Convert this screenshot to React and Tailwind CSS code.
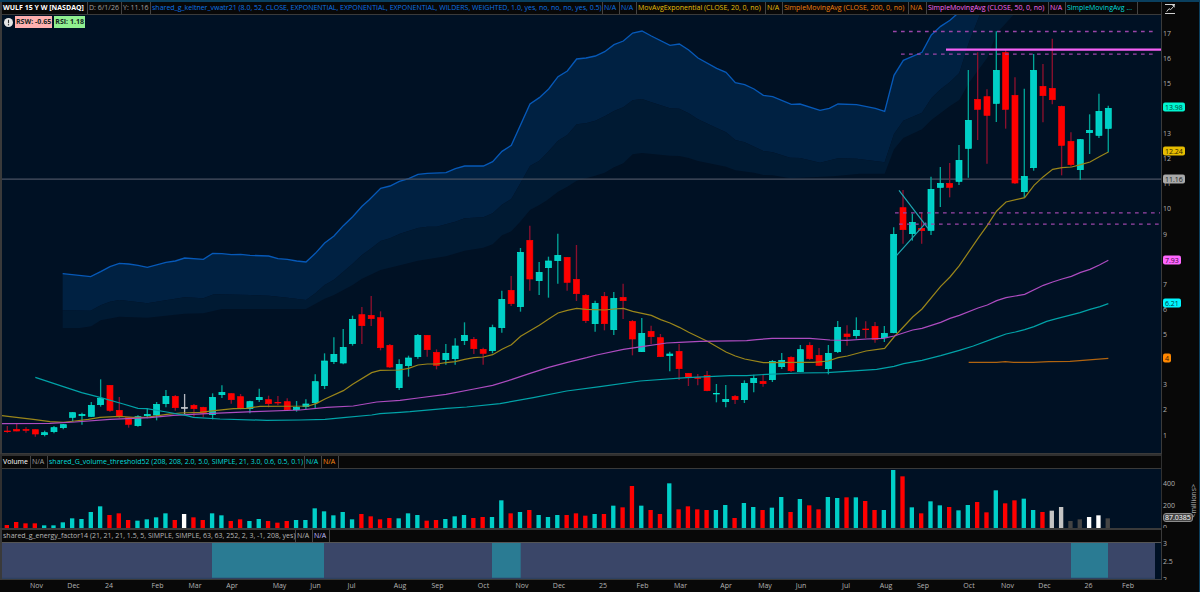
const NAVY = "#001124";

const candles = `r 1278 1292 1296 1298|r 1272 1287 1294 1294|r 1282 1287 1292 1298|r 1288 1288 1303 1310|c 1292 1297 1305 1309|c 1278 1282 1296 1300|c 1272 1273 1284 1288|c 1237 1237 1253 1264|c 1238 1242 1248 1274|c 1206 1215 1250 1250|c 1138 1194 1215 1220|r 1155 1155 1232 1235|r 1191 1230 1250 1255|r 1252 1252 1274 1283|c 1246 1249 1278 1280|c 1225 1242 1248 1255|c 1206 1212 1246 1261|c 1170 1188 1212 1222|r 1185 1188 1224 1232|w 1182 1221 1226 1243|r 1212 1215 1227 1250|r 1220 1221 1241 1252|c 1180 1191 1245 1258|c 1156 1176 1185 1194|r 1180 1180 1200 1211|r 1182 1189 1226 1228|c 1202 1204 1227 1240|c 1166 1191 1200 1206|r 1187 1198 1212 1222|r 1188 1206 1209 1216|r 1195 1204 1230 1233|c 1203 1221 1230 1235|c 1198 1211 1221 1228|c 1123 1144 1209 1224|c 1060 1082 1158 1167|c 1012 1062 1086 1092|c 987 1041 1090 1093|c 947 957 1032 1037|r 921 943 978 1032|r 888 945 957 978|r 934 952 1044 1051|r 1032 1035 1102 1104|c 1078 1092 1164 1170|c 1067 1073 1098 1130|c 1002 1005 1071 1076|r 1005 1005 1050 1070|r 1048 1056 1097 1108|c 1032 1059 1080 1094|c 1015 1037 1077 1094|c 967 1005 1023 1035|r 1011 1017 1047 1062|r 1043 1047 1061 1094|c 974 982 1053 1060|c 872 897 984 998|r 828 870 912 918|c 744 756 921 935|r 677 720 838 872|c 786 816 843 885|c 770 782 804 893|c 701 765 783 851|r 771 771 848 872|r 735 837 882 903|r 882 885 963 969|c 902 909 972 995|r 876 888 972 991|c 876 894 990 1005|r 851 891 903 957|r 960 963 1018 1066|c 954 999 1056 1056|r 977 993 1011 1032|r 1002 1012 1071 1071|c 1055 1061 1068 1114|r 1032 1053 1107 1140|r 1119 1119 1132 1158|r 1122 1132 1136 1156|r 1113 1125 1173 1174|c 1152 1179 1183 1207|c 1155 1197 1206 1222|r 1185 1188 1200 1212|c 1141 1149 1200 1209|c 1124 1134 1149 1177|r 1122 1143 1152 1160|c 1080 1083 1140 1146|c 1059 1080 1101 1107|r 1069 1071 1113 1116|c 1035 1048 1116 1116|r 1027 1035 1077 1079|r 1044 1065 1097 1098|c 1035 1059 1107 1123|c 963 981 1056 1059|r 976 1001 1011 1037|c 952 990 1008 1016|r 964 986 990 1014|r 966 978 1019 1028|c 978 999 1014 1026|c 682 702 999 1000|r 570 622 690 731|c 641 666 702 722|r 638 684 693 731|c 530 567 692 705|c 501 549 563 621|r 489 549 563 592|c 435 480 545 555|c 210 360 446 533|r 157 297 329 420|r 268 289 347 491|c 94 210 311 366|r 147 157 329 386|r 232 285 550 552|c 266 528 576 592|c 162 210 504 512|r 192 258 288 367|r 116 264 300 313|r 317 318 437 526|r 397 423 495 500|c 417 418 510 540|c 343 390 399 462|c 281 333 407 414|c 317 324 386 457`
  .split("|")
  .map((row) => {
    const [kind, ...v] = row.split(" ");
    return [kind, ...v.map(Number)];
  });

const volumes =
  "r225 r216 r220 r220 c226 c226 c217 c205 c207 c186 c169 r195 r190 r210 c212 c208 c202 c190 r210 w192 r202 r210 c190 c196 r213 r208 c213 c207 r213 r218 r213 c210 c210 c175 c184 c196 c186 c208 r192 r199 r208 r204 c205 c190 c195 r212 r210 c207 c199 c195 r204 r201 c201 c151 r190 c186 r180 c195 c201 c195 r195 r190 r197 c192 r192 c167 r172 r108 c167 r180 r192 c100 r178 r169 r178 r180 c180 c165 r204 c159 c171 r180 c173 c141 r186 c147 r166 r178 c141 c144 r142 c142 r153 r180 c180 c60 r79 c172 r190 c154 c166 r171 c181 c165 r156 r187 c121 r160 r151 c146 c180 r186 g182 g171 d213 d208 w201 w196 d205"
    .split(" ")
    .map((s) => [s[0], Number(s.slice(1))]);

const upper =
  "188,821 272,830 302,815 330,800 358,790 386,792 414,796 442,802 498,787 526,783 554,774 610,778 638,760 666,761 694,764 722,763 750,766 806,768 834,776 862,778 890,783 918,786 946,760 974,729 1002,708 1030,677 1058,650 1086,619 1107,600 1142,565 1170,558 1198,544 1226,536 1254,523 1282,520 1338,518 1366,506 1394,498 1450,498 1478,485 1506,454 1534,436 1590,312 1618,293 1646,267 1674,230 1702,213 1730,177 1758,174 1786,168 1814,155 1842,134 1870,123 1898,99 1926,93 1954,108 2010,136 2038,132 2066,150 2094,174 2150,205 2178,217 2206,248 2234,254 2262,267 2290,286 2318,290 2374,313 2400,312 2460,331 2488,325 2514,312 2570,314 2626,325 2654,334 2682,226 2710,181 2766,157 2794,105 2822,79 2850,61 2870,43";
const middle =
  "188,931 272,932 302,916 330,905 358,900 386,903 442,910 498,901 554,892 610,895 642,883 750,885 806,887 862,893 918,900 946,880 974,855 1002,839 1058,791 1086,765 1114,745 1142,723 1170,715 1200,701 1254,684 1282,680 1310,680 1366,665 1394,655 1450,652 1478,640 1506,614 1534,597 1562,548 1590,498 1618,482 1646,454 1674,422 1702,405 1730,373 1758,370 1786,362 1814,349 1842,333 1870,322 1898,301 1926,297 1954,307 2010,325 2038,326 2066,340 2094,358 2150,384 2178,397 2206,420 2234,427 2290,453 2318,457 2370,473 2400,474 2460,488 2514,475 2570,476 2654,487 2682,402 2710,362 2766,338 2794,295 2822,268 2850,246 2878,219 2906,130 2940,43";
const lower =
  "188,984 240,984 274,979 302,961 358,950 442,953 554,941 610,940 666,927 918,927 974,896 1002,885 1058,855 1086,836 1142,810 1200,796 1254,782 1338,769 1394,752 1450,743 1478,733 1506,706 1534,694 1562,664 1590,630 1618,615 1642,600 1674,575 1702,560 1730,542 1786,527 1814,518 1842,502 1870,490 1898,463 1926,459 2010,467 2038,468 2066,474 2094,483 2178,500 2206,511 2262,518 2290,525 2318,526 2370,535 2500,529 2540,525 2580,521 2654,521 2682,448 2710,414 2766,388 2794,360 2850,318 2878,300 2906,250 2962,173 2990,100 3042,43";

const reversed = (pts) => pts.split(" ").reverse().join(" ");

const averages = [
  ["#9a861a", "0,1246 30,1250 100,1258 150,1265 190,1267 225,1263 265,1258 300,1252 358,1249 400,1252 440,1252 500,1243 540,1239 600,1237 650,1231 700,1226 740,1225 780,1219 925,1218 950,1210 975,1197 1030,1172 1058,1153 1115,1118 1140,1111 1198,1110 1226,1105 1254,1095 1282,1092 1310,1092 1338,1088 1366,1085 1394,1078 1422,1073 1450,1071 1478,1064 1506,1048 1534,1034 1562,1009 1590,992 1618,976 1646,957 1674,939 1702,931 1730,925 1758,928 1814,930 1842,927 1870,925 1898,934 1954,946 1982,959 2010,969 2038,982 2066,997 2094,1010 2122,1024 2178,1056 2206,1068 2234,1077 2290,1088 2400,1087 2440,1087 2485,1083 2514,1073 2542,1068 2598,1053 2654,1045 2682,1011 2738,951 2766,927 2822,859 2850,831 2878,797 2934,715 2962,676 2990,633 3018,606 3074,593 3102,556 3130,530 3158,508 3186,503 3215,501 3242,494 3270,486 3298,470 3325,456"],
  ["#ad4cc0", "0,1271 150,1270 225,1266 330,1258 450,1253 520,1246 620,1241 760,1235 900,1230 980,1222 1060,1218 1130,1206 1200,1201 1254,1194 1338,1183 1422,1167 1478,1156 1534,1139 1590,1120 1646,1102 1702,1087 1760,1073 1790,1065 1870,1048 1926,1040 2000,1029 2038,1027 2100,1024 2240,1022 2270,1019 2316,1015 2430,1015 2490,1020 2540,1021 2600,1017 2650,1015 2682,1008 2738,990 2766,985 2822,967 2850,955 2878,946 2934,924 2962,915 2990,902 3018,893 3046,888 3074,883 3130,856 3158,846 3186,837 3214,829 3242,817 3270,808 3298,795 3325,781"],
  ["#00a3a8", "106,1132 190,1160 245,1178 300,1192 370,1212 414,1225 440,1226 500,1236 560,1247 580,1252 660,1257 800,1261 900,1260 975,1258 1030,1253 1115,1245 1140,1241 1200,1237 1230,1235 1340,1225 1400,1221 1500,1211 1600,1193 1700,1173 1800,1160 1920,1143 2060,1133 2190,1127 2240,1127 2300,1123 2400,1119 2480,1118 2540,1114 2630,1108 2682,1099 2711,1091 2766,1081 2822,1067 2878,1051 2920,1038 2990,1012 3018,1002 3046,996 3074,989 3102,980 3140,964 3170,956 3240,938 3270,928 3300,920 3325,911"],
  ["#b06410", "2906,1087 2990,1087 3016,1085 3040,1087 3100,1087 3146,1085 3210,1084 3325,1075"],
];

const bodyColor = { r: "#ff0000", c: "#00cfc8", w: "#c8ccd2" };
const edgeColor = { r: "#ff0000", c: "#00ecd2", w: "#c8ccd2" };
const wickColor = { r: "#8c102e", c: "#00a598", w: "#b4b8c0" };
const volColor = { r: "#ff0000", c: "#00cfc8", w: "#ffffff", g: "#c4c4c4", d: "#444444" };

const xAt = (i) => 22 + i * 27.99;

const mainCells = [
  ["w-[86px] font-bold text-white", "WULF 15 Y W [NASDAQ]"],
  ["w-[34px] text-[#a0a0a0]", "D: 6/1/26"],
  ["w-[29px] text-[#a0a0a0]", "Y: 11.16"],
  ["w-[452px] text-[#0c74e6]", "shared_g_keltner_vwatr21 (8.0, 52, CLOSE, EXPONENTIAL, EXPONENTIAL, EXPONENTIAL, WILDERS, WEIGHTED, 1.0, yes, no, no, no, yes, 0.5)"],
  ["w-[17px] text-[#0c74e6]", "N/A"],
  ["w-[17px] text-[#0c74e6]", "N/A"],
  ["w-[129px] text-[#e4bf0a]", "MovAvgExponential (CLOSE, 20, 0, no)"],
  ["w-[17px] text-[#e4bf0a]", "N/A"],
  ["w-[126px] text-[#f08010]", "SimpleMovingAvg (CLOSE, 200, 0, no)"],
  ["w-[18px] text-[#f08010]", "N/A"],
  ["w-[122px] text-[#f56af5]", "SimpleMovingAvg (CLOSE, 50, 0, no)"],
  ["w-[17px] text-[#f56af5]", "N/A"],
  ["w-[72px] text-[#00dcdc]", "SimpleMovingAvg ..."],
];
const volumeCells = [
  ["w-[29px] text-white", "Volume"],
  ["w-[17px] text-[#a0a0a0]", "N/A"],
  ["w-[257px] text-[#00dcdc]", "shared_G_volume_threshold52 (208, 208, 2.0, 5.0, SIMPLE, 21, 3.0, 0.6, 0.5, 0.1)"],
  ["w-[17px] text-[#00dcdc]", "N/A"],
  ["w-[17px] text-[#ff8810]", "N/A"],
];
const energyCells = [
  ["w-[294px] text-[#b8b8b8]", "shared_g_energy_factor14 (21, 21, 21, 1.5, 5, SIMPLE, SIMPLE, 63, 63, 252, 2, 3, -1, 208, yes)"],
  ["w-[17px] text-[#b8b8b8]", "N/A"],
  ["w-[17px] text-[#c0beff]", "N/A"],
];

const badges = [
  [107, "13.98", "bg-[#00f5d0] text-[#003c34]"],
  [151, "12.24", "bg-[#e6bc00] text-[#2e2500]"],
  [179, "11.16", "bg-[#a8a8a8] text-[#202020]"],
  [259, "7.93", "bg-[#ff66ff] text-[#3c0c3c]"],
  [302, "6.21", "bg-[#00f5ff] text-[#00383c]"],
  [357, "4", "bg-[#ff8800] text-[#301600]"],
];

// Levels fully covered by a badge carry no tick label.
const coveredLevels = [14, 8, 4];

const months = [
  [36.5, "Nov"], [73.5, "Dec"], [109, "24"], [157.5, "Feb"], [195, "Mar"], [232, "Apr"], [279.5, "May"], [315.5, "Jun"], [351.5, "Jul"], [400, "Aug"], [437.5, "Sep"], [483.5, "Oct"], [522, "Nov"], [559, "Dec"], [603, "25"], [642.5, "Feb"], [680.5, "Mar"], [726, "Apr"], [765, "May"], [801, "Jun"], [846, "Jul"], [886, "Aug"], [923, "Sep"], [969, "Oct"], [1007.5, "Nov"], [1044.5, "Dec"], [1088.5, "26"], [1128, "Feb"],
];

function CellRow({ cells }) {
  return (
    <header className="flex h-[12px] shrink-0 overflow-hidden whitespace-nowrap bg-[#080808] leading-[11px]">
      {cells.map(([cls, text], i) => (
        <span key={i} className={`shrink-0 border-r border-[#444444] pl-px ${cls}`}>
          {text}
        </span>
      ))}
    </header>
  );
}

function PriceChart() {
  return (
    <svg className="block h-full w-full" viewBox="6 45 3477 1314" preserveAspectRatio="none" role="img" aria-label="WULF weekly price">
      <rect x="0" y="0" width="3490" height="1400" fill={NAVY} />
      <polygon points={`${upper} ${reversed(middle)}`} fill="#002142" />
      <polygon points={`${middle} ${reversed(lower)}`} fill="#001a33" />
      <polyline points={upper} fill="none" stroke="#0659b8" strokeWidth="4" />
      <path d="M0 537.5H3483" stroke="#4a5262" strokeWidth="4" />
      {candles.map(([k, h, t, b, l], i) => (
        <g key={i}>
          <path d={`M${xAt(i)} ${h}V${l}`} stroke={wickColor[k]} strokeWidth="4" />
          <rect x={xAt(i) - 9} y={t + 1} width="18" height={Math.max(2, b - t - 2)} fill={bodyColor[k]} stroke={edgeColor[k]} strokeWidth="2" />
        </g>
      ))}
      <g fill="none" strokeWidth="3.6">
        {averages.map(([color, pts]) => (
          <polyline key={color} points={pts} stroke={color} />
        ))}
        <path d="M2697 571L2784 685M2690 766L2778 668" stroke="#1fa5b0" />
      </g>
      <g stroke="#9a45a8" strokeWidth="4" strokeDasharray="11 13">
        <path d="M2679 94.500H3471M2703 162.500H3471M2685 638.500H3480M2697 672.500H3483" />
      </g>
      <path d="M2838 149H3483" stroke="#f560f5" strokeWidth="7" />
    </svg>
  );
}

function VolumeChart() {
  return (
    <svg className="block h-full w-full" viewBox="6 57 3477 177" preserveAspectRatio="none" role="img" aria-label="Volume">
      <rect x="0" y="50" width="3490" height="190" fill={NAVY} />
      {volumes.map(([k, y], i) => (
        <rect key={i} x={xAt(i) - 8} y={y} width="13" height={234 - y} fill={volColor[k]} />
      ))}
    </svg>
  );
}

function EnergyChart() {
  return (
    <svg className="block h-full w-full" viewBox="6 0 3477 108" preserveAspectRatio="none" role="img" aria-label="Energy factor">
      <rect x="0" y="0" width="3490" height="108" fill={NAVY} />
      <rect x="0" y="0" width="3465" height="108" fill="#3a4668" />
      <path d="M636 0h336v108H636zM1476 0h86v108h-86zM3213 0h111v108h-111z" fill="#2a7b93" />
      <path d="M0 106H3465" stroke="#2e4160" strokeWidth="4" />
    </svg>
  );
}

function Alert() {
  return (
    <svg className="size-[9px]" viewBox="0 0 18 18" aria-label="Alert">
      <circle cx="9" cy="9" r="9" fill="#e6e6e6" />
      <path d="M9 3.500V10.500" stroke="#333" strokeWidth="2.200" />
      <circle cx="9" cy="13.500" r="1.400" fill="#333" />
    </svg>
  );
}

export default function App() {
  return (
    <main className="flex h-screen min-h-[400px] flex-col overflow-hidden border-t-2 border-r border-[#0a3f5e] bg-[#080808] font-['Open_Sans','Noto_Sans',sans-serif] text-[7px] text-[#b0b0b0]">
      <section className="flex min-h-0 flex-1">
        <div className="flex min-w-0 flex-1 flex-col border-r border-b border-l-2 border-[#3a3a3a]">
          <CellRow cells={mainCells} />
          <div className="relative min-h-0 flex-1 border-t border-[#3a3a3a]">
            <PriceChart />
            <div className="absolute top-[1px] left-[2px] flex items-center gap-[2px] font-bold leading-[12px] text-[#12251f]">
              <Alert />
              <span className="bg-[#ffb0b0] px-px">RSW: -0.65</span>
              <span className="bg-[#90f090] px-px">RSI: 1.18</span>
            </div>
          </div>
        </div>
        <aside className="flex w-[37px] shrink-0 flex-col">
          <button type="button" aria-label="Scale settings" className="h-[13px] pl-[3px]">
            <svg className="block h-[11px] w-[10px]" viewBox="0 0 30 33" fill="none" stroke="#d0d0d0" strokeWidth="3">
              <path d="M0 4.500H30M0 31.500H30M5 26L12 17L17 20L26 10" />
              <path d="M21 6H29V14Z" fill="#d0d0d0" stroke="none" />
            </svg>
          </button>
          <div className="relative min-h-0 flex-1">
            <ol className="flex h-full flex-col py-[6px] pl-px leading-[8px]">
              {Array.from({ length: 17 }, (_, i) => 17 - i).map((level) => (
                <li key={level} className="flex flex-1 items-center">
                  {coveredLevels.includes(level) ? null : level}
                </li>
              ))}
            </ol>
            {badges.map(([y, text, cls]) => (
              <span key={text} className={`absolute left-px -translate-y-1/2 rounded-[2px] px-[2px] leading-[9px] ${cls}`} style={{ top: `${((y - 15) / 438) * 100}%` }}>
                {text}
              </span>
            ))}
          </div>
        </aside>
      </section>

      <section className="flex h-[74px] shrink-0">
        <div className="flex min-w-0 flex-1 flex-col border-t-2 border-r border-l-2 border-[#303030]">
          <CellRow cells={volumeCells} />
          <div className="min-h-0 flex-1 border-t border-[#3a3a3a]">
            <VolumeChart />
          </div>
        </div>
        <aside className="relative w-[37px] shrink-0 overflow-hidden">
          <ol className="flex h-full flex-col justify-end pl-px leading-[8px]">
            <li className="h-[22px]">400</li>
            <li className="h-[22px]">200</li>
            <li className="h-[4px]">0</li>
          </ol>
          <span className="absolute right-px bottom-[11px] rotate-180 leading-[8px] [writing-mode:vertical-rl]">&lt;millions&gt;</span>
          <span className="absolute bottom-[6px] left-px rounded-[3px] border border-[#8c8c8c] bg-[#444444] px-px leading-[7px] text-white">87.0385</span>
        </aside>
      </section>

      <section className="flex h-[52px] shrink-0">
        <div className="flex min-w-0 flex-1 flex-col border-t-2 border-r border-b border-l-2 border-[#3a3a3a]">
          <CellRow cells={energyCells} />
          <div className="min-h-0 flex-1 border-t border-[#555555]">
            <EnergyChart />
          </div>
        </div>
        <ol className="flex w-[37px] shrink-0 flex-col justify-between overflow-hidden pt-[12px] pl-px leading-[8px]">
          <li>3</li>
          <li>2.5</li>
          <li className="h-[4px]">2</li>
        </ol>
      </section>

      <footer className="relative h-[12px] shrink-0 leading-[11px] text-[#b4b4b4]">
        {months.map(([x, label]) => (
          <span key={x} className="absolute -translate-x-1/2" style={{ left: `${(x / 1199) * 100}%` }}>
            {label}
          </span>
        ))}
      </footer>
    </main>
  );
}
